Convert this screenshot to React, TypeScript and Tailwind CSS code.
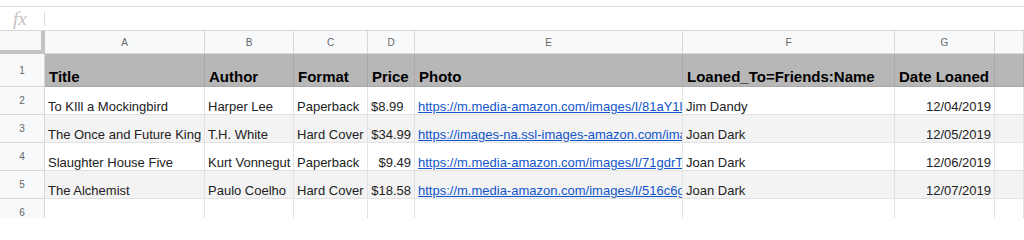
import React from 'react';

type Cell = { text: string; align?: 'left' | 'right'; link?: boolean };

const COLS = ['A', 'B', 'C', 'D', 'E', 'F', 'G', ''];

const HEADER = ['Title', 'Author', 'Format', 'Price', 'Photo', 'Loaned_To=Friends:Name', 'Date Loaned', ''];

const ROWS: Cell[][] = [
  [
    { text: 'To KIll a Mockingbird' },
    { text: 'Harper Lee' },
    { text: 'Paperback' },
    { text: '$8.99' },
    { text: 'https://m.media-amazon.com/images/I/81aY1lxk+0L.jpg', link: true },
    { text: 'Jim Dandy' },
    { text: '12/04/2019', align: 'right' },
    { text: '' },
  ],
  [
    { text: 'The Once and Future King' },
    { text: 'T.H. White' },
    { text: 'Hard Cover' },
    { text: '$34.99', align: 'right' },
    { text: 'https://images-na.ssl-images-amazon.com/images/I/51.jpg', link: true },
    { text: 'Joan Dark' },
    { text: '12/05/2019', align: 'right' },
    { text: '' },
  ],
  [
    { text: 'Slaughter House Five' },
    { text: 'Kurt Vonnegut' },
    { text: 'Paperback' },
    { text: '$9.49', align: 'right' },
    { text: 'https://m.media-amazon.com/images/I/71gdrTsGlqL.jpg', link: true },
    { text: 'Joan Dark' },
    { text: '12/06/2019', align: 'right' },
    { text: '' },
  ],
  [
    { text: 'The Alchemist' },
    { text: 'Paulo Coelho' },
    { text: 'Hard Cover' },
    { text: '$18.58', align: 'right' },
    { text: 'https://m.media-amazon.com/images/I/516c6gUQLaL.jpg', link: true },
    { text: 'Joan Dark' },
    { text: '12/07/2019', align: 'right' },
    { text: '' },
  ],
];

function RowHead({ n }: { n: number }) {
  return (
    <div className="flex items-center justify-center border-r border-b border-[#d6d6d6] bg-[#f8f9fa] text-[10px] text-[#666]">
      {n}
    </div>
  );
}

export default function App() {
  return (
    <div
      className="w-[1024px] h-[218px] overflow-hidden bg-white text-[#222]"
      style={{ fontFamily: '"Liberation Sans", Arial, sans-serif' }}
    >
      {/* top strip */}
      <div className="h-[7px] border-b border-[#e0e0e0]" />

      {/* formula bar */}
      <div className="h-[24px] flex items-center border-b border-[#d6d6d6]">
        <span
          className="ml-[13px] w-[21px] text-[19px] italic leading-none text-[#c4c4c4]"
          style={{ fontFamily: '"Liberation Serif", serif' }}
        >
          fx
        </span>
        <span className="ml-[10px] h-[14px] w-px bg-[#dadada]" />
      </div>

      {/* grid */}
      <div className="grid grid-cols-[45px_160px_89px_74px_47px_268px_212px_100px_1fr] grid-rows-[23px_33px_28px_28px_28px_28px_28px]">
        {/* column headers */}
        <div className="border-r-[4px] border-b-[4px] border-[#c4c4c4] bg-[#f8f9fa]" />
        {COLS.map((c, i) => (
          <div
            key={i}
            className="flex items-center justify-center border-r border-b border-[#d6d6d6] bg-[#f8f9fa] text-[10px] text-[#666]"
          >
            {c}
          </div>
        ))}

        {/* row 1: bold header */}
        <RowHead n={1} />
        {HEADER.map((h, i) => (
          <div
            key={i}
            className="flex items-end overflow-hidden whitespace-nowrap border-r border-b border-[#a9a9a9] bg-[#b7b7b7] px-[4px] pb-[2px] text-[15px] leading-[15px] font-bold text-black"
          >
            {h}
          </div>
        ))}

        {/* data rows */}
        {ROWS.map((row, r) => (
          <React.Fragment key={r}>
            <RowHead n={r + 2} />
            {row.map((cell, i) => (
              <div
                key={i}
                className={`flex items-end overflow-hidden whitespace-nowrap border-r border-b border-[#e2e2e2] px-[3px] pb-[1px] text-[13px] leading-[13px] ${
                  r % 2 === 1 ? 'bg-[#f3f3f3]' : 'bg-white'
                } ${cell.align === 'right' ? 'justify-end' : 'justify-start'}`}
              >
                {cell.link ? (
                  <span className="text-[#1155cc] underline">{cell.text}</span>
                ) : (
                  cell.text
                )}
              </div>
            ))}
          </React.Fragment>
        ))}

        {/* row 6: empty */}
        <RowHead n={6} />
        {COLS.map((_, i) => (
          <div key={i} className="border-r border-b border-[#e2e2e2] bg-white" />
        ))}
      </div>
    </div>
  );
}
